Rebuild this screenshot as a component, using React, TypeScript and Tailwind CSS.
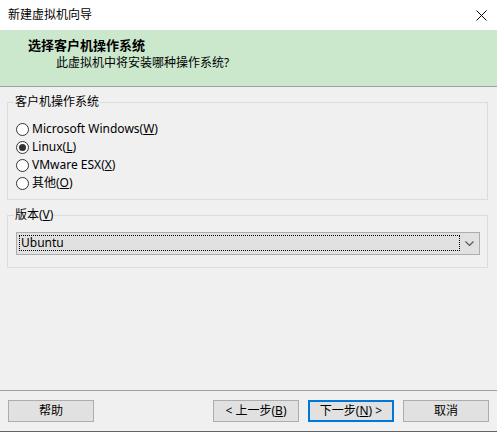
import React from "react";

const font = { fontFamily: '"Noto Sans", "Noto Sans CJK SC", sans-serif' };

function Radio({ checked, children }: { checked?: boolean; children: React.ReactNode }) {
  return (
    <div className="flex h-[18px] items-center">
      <span className="flex h-[13px] w-[13px] items-center justify-center rounded-full border border-[#333333] bg-white">
        {checked && <span className="h-[7px] w-[7px] rounded-full bg-[#333333]" />}
      </span>
      <span className="ml-[3px] text-[12px] leading-[16px] text-black">{children}</span>
    </div>
  );
}

function Btn({ children, primary }: { children: React.ReactNode; primary?: boolean }) {
  return (
    <div
      className={
        "flex h-[22px] w-[86px] items-center justify-center bg-[#e1e1e1] text-[12px] leading-[16px] text-black " +
        (primary ? "border-2 border-[#0078d7]" : "border border-[#adadad]")
      }
    >
      {children}
    </div>
  );
}

export default function App() {
  return (
    <div className="flex h-[432px] w-[497px] flex-col bg-[#f0f0f0]" style={font}>
      {/* title bar */}
      <div className="flex h-[30px] items-center justify-between bg-white pl-[8px] pr-[10px]">
        <span className="text-[12px] leading-[16px] text-black">新建虚拟机向导</span>
        <svg width="11" height="11" viewBox="0 0 11 11" className="text-black">
          <path d="M0.5 0.5 L10.5 10.5 M10.5 0.5 L0.5 10.5" stroke="currentColor" strokeWidth="1" fill="none" />
        </svg>
      </div>

      {/* header */}
      <div className="flex h-[57px] flex-col border-b border-[#a0a0a0] bg-[#cbe8cd] pt-[7px]">
        <div className="pl-[28px] text-[13px] font-bold leading-[16px] text-black">选择客户机操作系统</div>
        <div className="mt-[2px] pl-[56px] text-[12px] leading-[16px] text-black">此虚拟机中将安装哪种操作系统?</div>
      </div>

      {/* body */}
      <div className="flex flex-1 flex-col pl-[7px] pr-[9px]">
        <fieldset className="mt-[7px] border border-[#dcdcdc] pb-[7px]">
          <legend className="ml-[6px] px-[1px] text-[12px] leading-[16px] text-black">客户机操作系统</legend>
          <div className="mt-[10px] flex flex-col pl-[8px]">
            <Radio>
              Microsoft Windows(<span className="underline">W</span>)
            </Radio>
            <Radio checked>
              Linux(<span className="underline">L</span>)
            </Radio>
            <Radio>
              VMware ESX(<span className="underline">X</span>)
            </Radio>
            <Radio>
              其他(<span className="underline">O</span>)
            </Radio>
          </div>
        </fieldset>

        <fieldset className="mt-[7px] border border-[#dcdcdc] pb-[12px] pl-[8px] pr-[7px]">
          <legend className="-ml-[2px] px-[1px] text-[12px] leading-[16px] text-black">
            版本(<span className="underline">V</span>)
          </legend>
          <div className="mt-[9px] flex h-[23px] items-stretch border border-[#adadad] bg-[#e1e1e1] pb-[3px] pl-[2px] pt-[2px]">
            <div className="flex flex-1 items-center border border-dotted border-black pl-[1px] text-[12px] leading-[16px] text-black">
              Ubuntu
            </div>
            <div className="flex w-[19px] items-center justify-center">
              <svg width="9" height="5" viewBox="0 0 9 5">
                <path d="M0.5 0.5 L4.5 4.5 L8.5 0.5" stroke="#5a5a5a" strokeWidth="1.2" fill="none" />
              </svg>
            </div>
          </div>
        </fieldset>
      </div>

      {/* footer */}
      <div className="flex h-[41px] items-start border-t border-[#a0a0a0] pl-[8px] pr-[8px] pt-[9px]">
        <Btn>帮助</Btn>
        <div className="ml-auto flex gap-[9px]">
          <Btn>
            &lt; 上一步(<span className="underline">B</span>)
          </Btn>
          <Btn primary>
            下一步(<span className="underline">N</span>) &gt;
          </Btn>
          <Btn>取消</Btn>
        </div>
      </div>
      <div className="h-[1px] bg-[#646464]" />
    </div>
  );
}
